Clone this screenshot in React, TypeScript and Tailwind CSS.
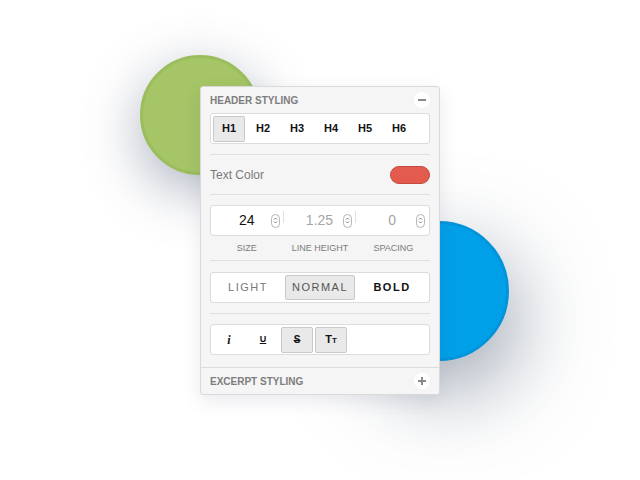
import { ReactNode } from "react";

const font = { fontFamily: '"Liberation Sans", Arial, sans-serif' };

const RoundIcon = ({ plus }: { plus?: boolean }) => (
  <span className="flex h-[16px] w-[16px] items-center justify-center rounded-full bg-white">
    <svg width="8" height="8" viewBox="0 0 8 8">
      <rect x="0" y="3" width="8" height="2" fill="#8a8a8a" />
      {plus && <rect x="3" y="0" width="2" height="8" fill="#8a8a8a" />}
    </svg>
  </span>
);

const Spinner = () => (
  <span className="flex h-[14px] w-[9px] flex-col items-center justify-center rounded-full border border-[#b5b5b5] bg-white">
    <svg width="5" height="9" viewBox="0 0 5 9">
      <path d="M1 3.5 L2.5 2 L4 3.5 M1 5.5 L2.5 7 L4 5.5" stroke="#777" strokeWidth="0.9" fill="none" />
    </svg>
  </span>
);

const Box = ({ children, className = "" }: { children: ReactNode; className?: string }) => (
  <div className={`rounded-[3px] border border-[#dcdcdc] bg-white ${className}`}>{children}</div>
);

const Btn = ({ active, children }: { active?: boolean; children: ReactNode }) => (
  <div
    className={`flex h-[26px] w-[32px] items-center justify-center rounded-[2px] border text-[11px] font-bold text-[#111] ${
      active ? "border-[#c9c9c9] bg-[#e9e9e9]" : "border-transparent"
    }`}
  >
    {children}
  </div>
);

const NumCol = ({ value, dim }: { value: string; dim?: boolean }) => (
  <div className="flex items-center pl-[12px] pr-[4px]">
    <span className={`flex-1 text-center text-[14px] ${dim ? "text-[#a5a5a5]" : "text-[#111]"}`}>{value}</span>
    <Spinner />
  </div>
);

export default function App() {
  return (
    <div className="relative flex h-[480px] w-[640px] items-start justify-center overflow-hidden bg-white pt-[86px]" style={font}>
      <div className="absolute left-[140px] top-[55px] h-[120px] w-[120px] rounded-full border-[3px] border-[#9bbd5c] bg-[#a5c566] shadow-[0_16px_55px_rgba(70,85,110,0.45)]" />
      <div className="absolute left-[369px] top-[221px] h-[140px] w-[140px] rounded-full border-[3px] border-[#0094dc] bg-[#00a0e9] shadow-[8px_30px_85px_rgba(70,85,110,0.55)]" />

      <div className="relative w-[240px] rounded-[3px] border border-[#d9d9d9] bg-[#f5f5f5] shadow-[0_6px_18px_rgba(70,85,110,0.12)]">
        <div className="px-[9px]">
          <div className="flex h-[26px] items-center justify-between">
            <span className="text-[10px] font-bold text-[#7d7d7d]">HEADER STYLING</span>
            <RoundIcon />
          </div>
          <Box className="flex h-[31px] items-center gap-[2px] px-[2px]">
            {["H1", "H2", "H3", "H4", "H5", "H6"].map((h, i) => (
              <Btn key={h} active={i === 0}>
                {h}
              </Btn>
            ))}
          </Box>
          <div className="mt-[10px] border-t border-[#e0e0e0]" />
          <div className="flex h-[39px] items-center justify-between">
            <span className="text-[12px] text-[#7a7a7a]">Text Color</span>
            <span className="h-[18px] w-[40px] rounded-full border border-[#c44a3f] bg-[#e35a4f]" />
          </div>
          <div className="border-t border-[#e0e0e0]" />
          <Box className="mt-[10px] grid h-[31px] grid-cols-3 items-center">
            <div className="relative">
              <NumCol value="24" />
              <span className="absolute right-0 top-[1px] h-[12px] border-r border-[#e0e0e0]" />
            </div>
            <div className="relative">
              <NumCol value="1.25" dim />
              <span className="absolute right-0 top-[1px] h-[12px] border-r border-[#e0e0e0]" />
            </div>
            <NumCol value="0" dim />
          </Box>
          <div className="grid h-[24px] grid-cols-3 items-center pt-[1px] text-center text-[9px] text-[#7a7a7a]">
            <span>SIZE</span>
            <span>LINE HEIGHT</span>
            <span>SPACING</span>
          </div>
          <div className="border-t border-[#e0e0e0]" />
          <Box className="mt-[11px] grid h-[31px] grid-cols-3 items-center gap-[2px] px-[2px] text-[11px] tracking-[1.5px]">
            <span className="text-center text-[#777]">LIGHT</span>
            <span className="flex h-[25px] items-center justify-center rounded-[2px] border border-[#c9c9c9] bg-[#e9e9e9] text-[#555]">
              NORMAL
            </span>
            <span className="text-center font-bold text-[#111]">BOLD</span>
          </Box>
          <div className="mt-[10px] border-t border-[#e0e0e0]" />
          <Box className="mt-[10px] flex h-[31px] items-center gap-[2px] px-[2px]">
            <Btn>
              <span className="italic" style={{ fontFamily: '"Liberation Serif", serif', fontSize: 12 }}>i</span>
            </Btn>
            <Btn>
              <span className="text-[9px] underline">U</span>
            </Btn>
            <Btn active>
              <span className="text-[10px] line-through">S</span>
            </Btn>
            <Btn active>
              <span className="text-[11px]">
                T<span className="text-[8px]">T</span>
              </span>
            </Btn>
          </Box>
        </div>
        <div className="mt-[12px] flex h-[27px] items-center justify-between border-t border-[#dcdcdc] px-[9px]">
          <span className="text-[10px] font-bold text-[#7d7d7d]">EXCERPT STYLING</span>
          <RoundIcon plus />
        </div>
      </div>
    </div>
  );
}
